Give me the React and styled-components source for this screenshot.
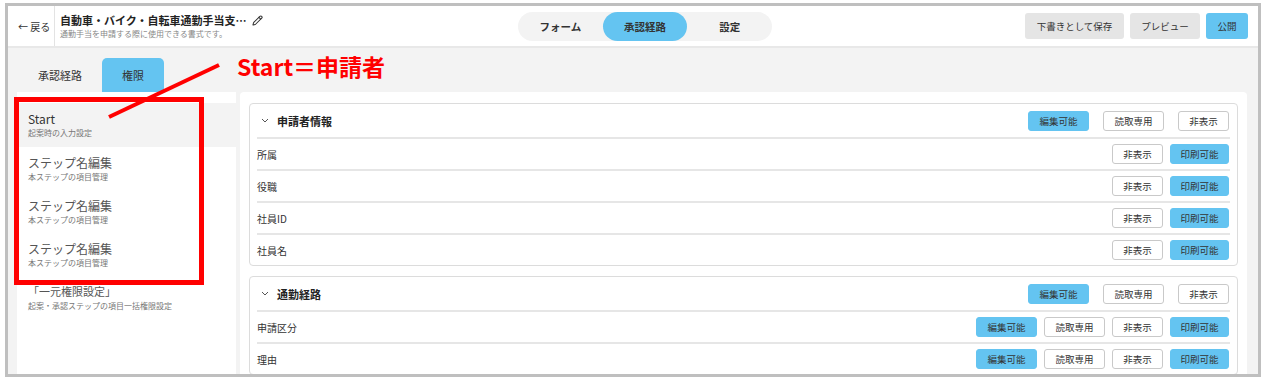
import React from "react";
import styled, { createGlobalStyle, css } from "styled-components";
import { Pencil } from "lucide-react";

const blue = "#64c4f1";

const GlobalStyle = createGlobalStyle`
  body {
    margin: 0;
    background: #ffffff;
    font-family: "Noto Sans CJK JP", "Noto Sans", sans-serif;
    color: #333;
  }
  * { box-sizing: border-box; }
`;

const Page = styled.div`
  position: relative;
  width: 1269px;
  height: 385px;
  padding: 3px 0 0 5px;
`;

const Frame = styled.div`
  width: 1256px;
  height: 374px;
  border: 3px solid #bfbfbf;
  overflow: hidden;
  display: flex;
  flex-direction: column;
  background: #f3f3f3;
`;

const Header = styled.header`
  height: 42px;
  flex: none;
  background: #fff;
  border-bottom: 2px solid #e8e8e8;
  display: flex;
  align-items: center;
`;

const Back = styled.div`
  width: 47px;
  height: 100%;
  border-right: 1px solid #e3e3e3;
  display: flex;
  align-items: center;
  padding-left: 10px;
  font-size: 10px;
  color: #333;
  white-space: nowrap;
`;

const LeftGroup = styled.div`
  flex: 1;
  display: flex;
  align-items: center;
  height: 100%;
`;

const TitleBlock = styled.div`
  margin-left: 5px;
  display: flex;
  flex-direction: column;
`;

const Title = styled.div`
  font-size: 11px;
  font-weight: 700;
  color: #222;
  display: flex;
  align-items: center;
  gap: 5px;
  line-height: 16px;
`;

const Subtitle = styled.div`
  font-size: 8px;
  color: #888;
  line-height: 12px;
`;

const Segmented = styled.div`
  margin-left: 34px;
  width: 254px;
  height: 29px;
  background: #f3f3f3;
  border-radius: 15px;
  display: flex;
`;

const Segment = styled.div`
  flex: 1;
  border-radius: 15px;
  display: flex;
  align-items: center;
  justify-content: center;
  font-size: 10.5px;
  font-weight: 700;
  color: #333;
  ${(p) =>
    p.$active &&
    css`
      background: ${blue};
    `}
`;

const RightGroup = styled.div`
  flex: 1;
  display: flex;
  justify-content: flex-end;
  gap: 6px;
  padding-right: 10px;
`;

const TopButton = styled.div`
  width: ${(p) => p.$w}px;
  height: 26px;
  border-radius: 3px;
  background: ${(p) => (p.$primary ? blue : "#e5e5e5")};
  display: flex;
  align-items: center;
  justify-content: center;
  font-size: 9.5px;
  color: #333;
`;

const TabRow = styled.div`
  height: 44px;
  flex: none;
  display: flex;
  align-items: flex-end;
  padding-left: 21px;
  gap: 11px;
`;

const Tab = styled.div`
  width: 62px;
  height: 34px;
  border-radius: 5px 5px 0 0;
  display: flex;
  align-items: center;
  justify-content: center;
  font-size: 11px;
  color: #333;
  background: ${(p) => (p.$active ? blue : "transparent")};
`;

const Body = styled.div`
  flex: 1;
  display: flex;
  gap: 4px;
  padding: 0 11px 0 9px;
  min-height: 0;
`;

const Side = styled.aside`
  width: 219px;
  flex: none;
  background: #fff;
  padding-top: 11px;
`;

const StepItem = styled.div`
  height: ${(p) => (p.$active ? 44 : 43)}px;
  padding: 7px 0 0 11px;
  background: ${(p) => (p.$active ? "#f3f3f3" : "transparent")};
`;

const StepTitle = styled.div`
  font-size: ${(p) => (p.$small ? 11 : 12)}px;
  line-height: 17px;
  color: ${(p) => (p.$dark ? "#333" : "#555")};
`;

const StepSub = styled.div`
  font-size: 8px;
  line-height: 12px;
  color: #777;
`;

const Main = styled.main`
  flex: 1;
  background: #fff;
  border-radius: 4px 4px 0 0;
  padding: 11px 9px 0;
  display: flex;
  flex-direction: column;
  gap: 10px;
`;

const Card = styled.section`
  border: 1px solid #dcdcdc;
  border-radius: 4px;
  background: #fff;
  padding: 0 7px;
  flex: none;
`;

const CardHead = styled.div`
  height: 33px;
  display: flex;
  align-items: center;
  padding-left: 4px;
`;

const CardTitle = styled.div`
  flex: 1;
  margin-left: 8px;
  font-size: 11px;
  font-weight: 700;
  color: #222;
`;

const Row = styled.div`
  height: 32px;
  border-top: 2px solid #e6e6e6;
  display: flex;
  align-items: center;
`;

const Label = styled.div`
  flex: 1;
  font-size: 10px;
  color: #333;
`;

const Buttons = styled.div`
  display: flex;
  gap: ${(p) => p.$gap}px;
  margin-right: 1px;
`;

const Chip = styled.div`
  width: ${(p) => p.$w}px;
  height: 20px;
  border-radius: 3px;
  display: flex;
  align-items: center;
  justify-content: center;
  font-size: 9.5px;
  color: #333;
  border: 1px solid ${(p) => (p.$on ? blue : "#c9c9c9")};
  background: ${(p) => (p.$on ? blue : "#fff")};
`;

const Chevron = () => (
  <svg width="8" height="5" viewBox="0 0 8 5">
    <polyline points="1,1 4,4 7,1" fill="none" stroke="#555" strokeWidth="1" />
  </svg>
);

const MarkBox = styled.div`
  position: absolute;
  left: 14px;
  top: 97px;
  width: 190px;
  height: 188px;
  border: 5px solid #ff0000;
  pointer-events: none;
`;

const MarkLine = styled.svg`
  position: absolute;
  left: 0;
  top: 0;
  pointer-events: none;
`;

const MarkText = styled.div`
  position: absolute;
  left: 237px;
  top: 52px;
  font-size: 23px;
  line-height: 28px;
  font-weight: 700;
  color: #ff0000;
  white-space: nowrap;
`;

const widths = { 編集可能: 61, 読取専用: 61, 非表示: 51, 印刷可能: 59 };

const ChipSet = ({ gap, items, on }) => (
  <Buttons $gap={gap}>
    {items.map((t) => (
      <Chip key={t} $w={widths[t]} $on={on.includes(t)}>
        {t}
      </Chip>
    ))}
  </Buttons>
);

const sections = [
  {
    title: "申請者情報",
    rows: ["所属", "役職", "社員ID", "社員名"],
    full: false,
  },
  {
    title: "通勤経路",
    rows: ["申請区分", "理由"],
    full: true,
  },
];

const steps = [
  { title: "ステップ名編集", sub: "本ステップの項目管理" },
  { title: "ステップ名編集", sub: "本ステップの項目管理" },
  { title: "ステップ名編集", sub: "本ステップの項目管理" },
];

export default function App() {
  return (
    <Page>
      <GlobalStyle />
      <Frame>
        <Header>
          <LeftGroup>
            <Back>← 戻る</Back>
            <TitleBlock>
              <Title>
                自動車・バイク・自転車通勤手当支…
                <Pencil size={11} strokeWidth={2.2} color="#333" />
              </Title>
              <Subtitle>通勤手当を申請する際に使用できる書式です。</Subtitle>
            </TitleBlock>
          </LeftGroup>
          <Segmented>
            <Segment>フォーム</Segment>
            <Segment $active>承認経路</Segment>
            <Segment>設定</Segment>
          </Segmented>
          <RightGroup>
            <TopButton $w={99}>下書きとして保存</TopButton>
            <TopButton $w={70}>プレビュー</TopButton>
            <TopButton $w={42} $primary>
              公開
            </TopButton>
          </RightGroup>
        </Header>
        <TabRow>
          <Tab>承認経路</Tab>
          <Tab $active>権限</Tab>
        </TabRow>
        <Body>
          <Side>
            <StepItem $active>
              <StepTitle $dark>Start</StepTitle>
              <StepSub>起案時の入力設定</StepSub>
            </StepItem>
            {steps.map((s, i) => (
              <StepItem key={i}>
                <StepTitle>{s.title}</StepTitle>
                <StepSub>{s.sub}</StepSub>
              </StepItem>
            ))}
            <StepItem>
              <StepTitle $small>「一元権限設定」</StepTitle>
              <StepSub>起案・承認ステップの項目一括権限設定</StepSub>
            </StepItem>
          </Side>
          <Main>
            {sections.map((sec) => (
              <Card key={sec.title}>
                <CardHead>
                  <Chevron />
                  <CardTitle>{sec.title}</CardTitle>
                  <ChipSet
                    gap={14}
                    items={["編集可能", "読取専用", "非表示"]}
                    on={["編集可能"]}
                  />
                </CardHead>
                {sec.rows.map((r) => (
                  <Row key={r}>
                    <Label>{r}</Label>
                    <ChipSet
                      gap={7}
                      items={
                        sec.full
                          ? ["編集可能", "読取専用", "非表示", "印刷可能"]
                          : ["非表示", "印刷可能"]
                      }
                      on={["編集可能", "印刷可能"]}
                    />
                  </Row>
                ))}
              </Card>
            ))}
          </Main>
        </Body>
      </Frame>
      <MarkBox />
      <MarkLine width="1269" height="385">
        <line x1="219" y1="65" x2="109" y2="117" stroke="#ff0000" strokeWidth="4" />
      </MarkLine>
      <MarkText>Start＝申請者</MarkText>
    </Page>
  );
}
